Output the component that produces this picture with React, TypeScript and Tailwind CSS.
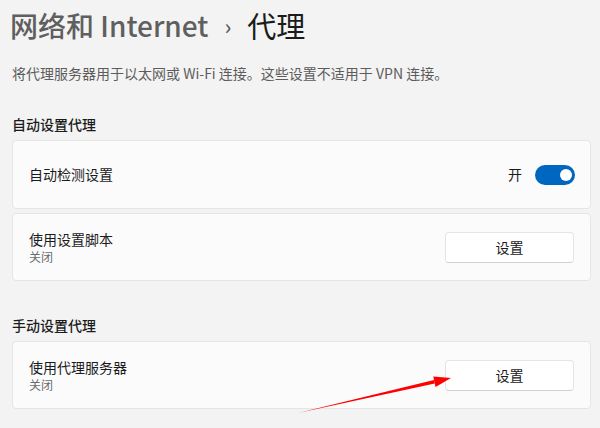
import React from "react";

const font = { fontFamily: '"Noto Sans CJK SC", "Noto Sans", sans-serif' };

function SetButton() {
  return (
    <button className="w-[129px] h-[31px] rounded-[4px] bg-white border border-[#e5e5e5] border-b-[#d0d0d0] text-[14px] text-[#1b1b1b] flex items-center justify-center">
      设置
    </button>
  );
}

function TwoLine({ title, sub }: { title: string; sub: string }) {
  return (
    <div className="flex flex-col">
      <span className="text-[14px] leading-[20px] text-[#1b1b1b]">{title}</span>
      <span className="text-[12px] leading-[16px] text-[#6b6b6b]">{sub}</span>
    </div>
  );
}

export default function App() {
  return (
    <div
      className="relative w-[600px] h-[428px] overflow-hidden bg-[#f3f3f3] pl-[12px] pr-[9px]"
      style={font}
    >
      <div className="h-[50px] flex items-center -ml-[2px] text-[28px] leading-[36px]">
        <span className="text-[#5f5f5f] font-medium">网络和 Internet</span>
        <span className="text-[#5f5f5f] text-[22px] mx-[16px] font-medium">›</span>
        <span className="text-[#1b1b1b] text-[29px] font-normal">代理</span>
      </div>
      <div className="mt-[13px] h-[20px] flex items-center text-[14px] text-[#5c5c5c]">
        将代理服务器用于以太网或 Wi-Fi 连接。这些设置不适用于 VPN 连接。
      </div>
      <div className="mt-[31px] h-[20px] flex items-center text-[14px] font-medium text-[#1b1b1b]">
        自动设置代理
      </div>
      <div className="mt-[6px] h-[69px] rounded-[4px] bg-[#fbfbfb] border border-[#e5e5e5] flex items-center justify-between pl-[16px] pr-[15px]">
        <span className="text-[14px] text-[#1b1b1b]">自动检测设置</span>
        <div className="flex items-center gap-[13px]">
          <span className="text-[14px] text-[#1b1b1b]">开</span>
          <div className="w-[40px] h-[20px] rounded-full bg-[#0067c0] flex items-center justify-end pr-[3px]">
            <div className="w-[12px] h-[12px] rounded-full bg-white" />
          </div>
        </div>
      </div>
      <div className="mt-[4px] h-[68px] rounded-[4px] bg-[#fbfbfb] border border-[#e5e5e5] flex items-center justify-between pl-[16px] pr-[16px]">
        <TwoLine title="使用设置脚本" sub="关闭" />
        <SetButton />
      </div>
      <div className="mt-[34px] h-[20px] flex items-center text-[14px] font-medium text-[#1b1b1b]">
        手动设置代理
      </div>
      <div className="mt-[6px] h-[68px] rounded-[4px] bg-[#fbfbfb] border border-[#e5e5e5] flex items-center justify-between pl-[16px] pr-[16px]">
        <TwoLine title="使用代理服务器" sub="关闭" />
        <SetButton />
      </div>
      <svg
        className="absolute left-0 top-0 pointer-events-none"
        width="600"
        height="428"
        viewBox="0 0 600 428"
      >
        <polygon points="298,413 434.8,383.6 434,380" fill="#ff0000" />
        <polygon points="451,378 435.5,387 433.3,376.5" fill="#ff0000" />
      </svg>
    </div>
  );
}
